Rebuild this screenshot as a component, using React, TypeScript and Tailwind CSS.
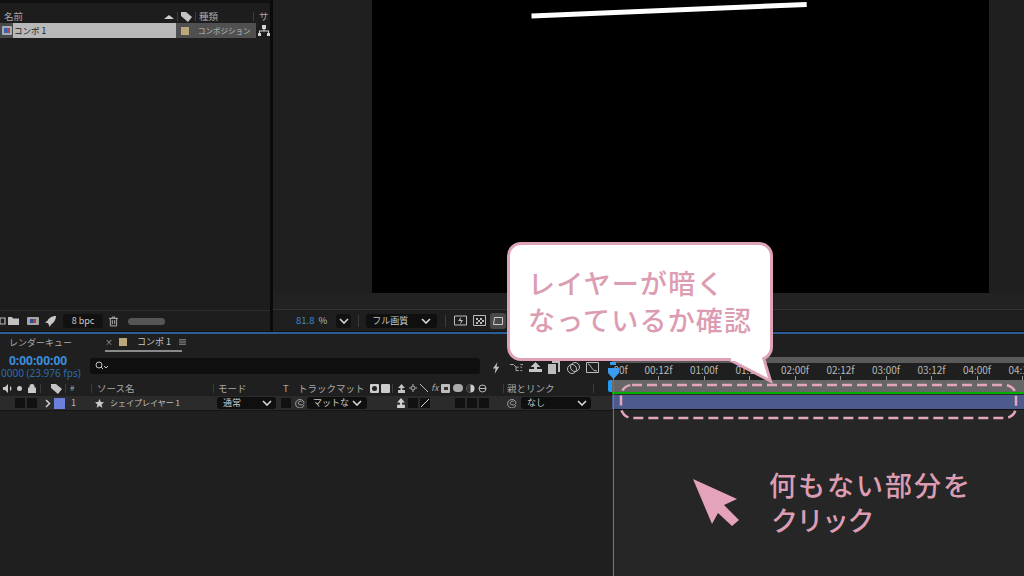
import React from "react";
const F = "font-['Noto_Sans_CJK_JP','Noto_Sans',sans-serif]";

function Chevron({ className = "" }: { className?: string }) {
  return (
    <svg width="10" height="6" viewBox="0 0 10 6" className={`shrink-0 ${className}`}>
      <path d="M1 1l4 4 4-4" fill="none" stroke="#d8d8d8" strokeWidth="1.6" />
    </svg>
  );
}

function Tag() {
  return (
    <svg width="11" height="11" viewBox="0 0 11 11" className="block">
      <path d="M0 1h5l6 5-4 5-7-6z" fill="#c4c4c4" />
    </svg>
  );
}

function Sep({ h = "h-[9px]" }: { h?: string }) {
  return <div className={`w-px ${h} bg-[#3c3c3c] shrink-0`} />;
}

function Sel({ w, text, className = "" }: { w: string; text: string; className?: string }) {
  return (
    <div className={`${w} h-[12px] rounded-[3px] bg-[#0f0f0f] flex items-center justify-between pl-[6px] pr-[4px] shrink-0 text-[9px] text-[#c8c8c8] ${className}`}>
      <span className="whitespace-nowrap">{text}</span>
      <Chevron />
    </div>
  );
}

function Sq() {
  return <div className="w-[10px] h-[10px] bg-[#111111] rounded-[1px] shrink-0" />;
}

function Spiral({ className = "" }: { className?: string }) {
  return (
    <svg width="10" height="10" viewBox="0 0 10 10" className={`shrink-0 ${className}`}>
      <path d="M9 7A4.300 4.300 0 1 1 9 4.500C9 7 5 7.500 3.500 6A2 2 0 0 1 6.500 3.500" fill="none" stroke="#a0a0a0" />
    </svg>
  );
}

const ticks = ["00:12f", "01:00f", "01:12f", "02:00f", "02:12f", "03:00f", "03:12f", "04:00f", "04:12f"];

function TopLeft() {
  return (
    <div className="w-[270px] h-full bg-[#1d1d1d] flex flex-col shrink-0">
      <div className="h-[3px] bg-[#111111]" />
      <div className="h-[20px] pt-[6px] flex items-center text-[9.500px] text-[#a8a8a8] pl-[4px]">
        <span className="w-[160px]">名前</span>
        <svg width="10" height="5" viewBox="0 0 10 5" className="mr-[3px]"><path d="M0 5l5-4 5 4z" fill="#cfcfcf" /></svg>
        <Sep />
        <span className="ml-[3px] mr-[3px]"><Tag /></span>
        <Sep />
        <span className="ml-[3px] w-[54px]">種類</span>
        <Sep />
        <span className="ml-[5px]">サ</span>
      </div>
      <div className="h-[15px] flex items-stretch">
        <div className="w-[13px] bg-[#4a4a4a] flex items-center justify-center">
          <div className="w-[10px] h-[9px] bg-[#a3adb8] rounded-[1px] flex items-center justify-center gap-0">
            <div className="w-[3px] h-[5px] bg-[#3a5fb0]" />
            <div className="w-[3px] h-[5px] bg-[#b04a4a]" />
          </div>
        </div>
        <div className="w-[163px] bg-[#b9b9b9] text-[#1a1a1a] text-[8.500px] flex items-center pl-[1px]">コンポ 1</div>
        <div className="w-[80px] bg-[#505050] flex items-center text-[7.500px] text-[#c0c0c0] whitespace-nowrap">
          <div className="w-[8px] h-[8px] bg-[#bba77c] ml-[5px] mr-[9px] shrink-0" />
          コンポジション
        </div>
        <svg width="12" height="11" viewBox="0 0 12 11" className="ml-[2px] mt-[2px]"><path d="M4 0h4v4H6.600v1.600H11V8h1v3H9V8h1V6.600H2V8h1v3H0V8h1V5.600h4.400V4H4z" fill="#d4d4d4" /></svg>
      </div>
      <div className="flex-1" />
      <div className="h-px bg-[#2c2c2c]" />
      <div className="h-[20px] flex items-center">
        <svg width="6" height="8" viewBox="0 0 6 8" className="mr-[2px]"><path d="M0 1h5v6H0z" fill="none" stroke="#b8b8b8" strokeWidth="1.200" /></svg>
        <svg width="11" height="8" viewBox="0 0 11 8" className="mr-[8px]"><path d="M0 0h4l1 1.500h6V8H0z" fill="#c2c2c2" /></svg>
        <div className="w-[12px] h-[8px] bg-[#a5a5a5] rounded-[1px] flex items-center justify-center mr-[6px]"><div className="w-[3px] h-[4px] bg-[#2f4f9a]" /><div className="w-[3px] h-[4px] bg-[#a84545]" /></div>
        <svg width="11" height="11" viewBox="0 0 12 12" className="mr-[7px]"><path d="M12 0C8 0 4 2 3 5L0 7l3 .500L4.500 10 5 12l2-3c3-2 5-5 5-9z" fill="#c8c8c8" /></svg>
        <div className="w-[40px] h-[14px] rounded-[3px] bg-[#111111] text-[9px] text-[#c8c8c8] flex items-center justify-center mr-[6px] shrink-0">8 bpc</div>
        <svg width="9" height="11" viewBox="0 0 10 11" className="mr-[10px]"><path d="M0 2h10M3.500 2V.600h3V2M1.500 2v8.400h7V2M3.700 4v4.500M6.300 4v4.500" fill="none" stroke="#bcbcbc" strokeWidth="1" /></svg>
        <div className="w-[37px] h-[7px] rounded-full bg-[#565656]" />
      </div>
    </div>
  );
}

function Viewer() {
  return (
    <div className="flex-1 h-full bg-[#1f1f1f] flex flex-col">
      <div className="h-[293px] flex justify-start pl-[99px] shrink-0">
        <div className="w-[617px] h-full bg-black relative overflow-hidden">
          <svg className="absolute left-0 top-0" width="617" height="30" viewBox="0 0 617 30">
            <path d="M159.500 16L434.700 4.500" stroke="#ffffff" strokeWidth="5" fill="none" />
          </svg>
        </div>
      </div>
      <div className="h-[16px] bg-[#222222] shrink-0" />
      <div className="h-px bg-[#333333] shrink-0" />
      <div className="flex-1 flex items-center text-[9.500px] bg-[#1e1e1e]">
        <span className="ml-[23px] text-[#3f86d1]">81.8</span>
        <span className="ml-[4px] text-[#b5b5b5]">%</span>
        <div className="ml-[9px] w-[15px] h-[14px] rounded-[3px] bg-[#111111] flex items-center justify-center shrink-0"><Chevron /></div>
        <div className="ml-[7px] mr-[7px]"><Sep h="h-[12px]" /></div>
        <Sel w="w-[71px]" text="フル画質" className="h-[14px] pr-[6px]" />
        <div className="ml-[8px] mr-[8px]"><Sep h="h-[12px]" /></div>
        <svg width="13" height="12" viewBox="0 0 13 12" className="mr-[6px] shrink-0"><path d="M.500 1h12v9H.500z" fill="none" stroke="#bbb" /><path d="M7 2L4 6h3l-1 4 3-5H6.500z" fill="#bbb" /></svg>
        <svg width="13" height="11" viewBox="0 0 13 11" className="mr-[4px] shrink-0"><path d="M.500.500h12v10H.500z" fill="none" stroke="#bbb" /><path d="M3 3h2v2H3zM7 3h2v2H7zM5 5h2v2H5zM9 5h2v2H9zM3 7h2v2H3zM7 7h2v2H7z" fill="#bbb" /></svg>
        <div className="w-[16px] h-[16px] bg-[#484848] rounded-[3px] flex items-center justify-center shrink-0"><svg width="12" height="10" viewBox="0 0 12 10"><path d="M2.500 1.500h8v7h-9z" fill="none" stroke="#ccc" /></svg></div>
      </div>
    </div>
  );
}

function Toolbar() {
  return (
    <div className="flex items-center">
      <svg width="9" height="12" viewBox="0 0 10 13" className="mr-[9px] shrink-0"><path d="M6 0L1 7h3l-1 6 5-8H5z" fill="#c4c4c4" /></svg>
      <svg width="13" height="10" viewBox="0 0 15 10" className="mr-[6px] shrink-0"><path d="M0 1h4l3 3h3M7 4v4h3M12 1h3M12 4h2M12 8h2" stroke="#c4c4c4" fill="none" /></svg>
      <svg width="13" height="12" viewBox="0 0 13 12" className="mr-[6px] shrink-0"><path d="M6.500 0l5 5H8v2h5v3H0V7h5V5H1.500z" fill="#c4c4c4" /></svg>
      <svg width="12" height="13" viewBox="0 0 12 13" className="mr-[7px] shrink-0"><path d="M4 0h8v11h-2V2H4zM0 3h8v10H0z" fill="#bdbdbd" /></svg>
      <svg width="13" height="12" viewBox="0 0 13 12" className="mr-[6px] shrink-0"><circle cx="5" cy="7" r="4.500" fill="none" stroke="#bdbdbd" /><circle cx="8" cy="5" r="4.500" fill="none" stroke="#bdbdbd" /></svg>
      <svg width="13" height="11" viewBox="0 0 13 11" className="shrink-0"><path d="M.500.500h12v10H.500zM2 2c3 0 3 7 9 7" fill="none" stroke="#bdbdbd" /></svg>
    </div>
  );
}

function Timeline() {
  return (
    <div className="flex-1 min-h-0 bg-[#1f1f1f] flex flex-col overflow-hidden">
      <div className="h-[22px] flex items-stretch text-[9px] text-[#a8a8a8] shrink-0">
        <div className="h-[18px] flex items-center">
          <span className="ml-[9px] w-[96px] whitespace-nowrap">レンダーキュー</span>
        </div>
        <div className="h-[18px] w-[77px] flex items-center border-b-2 border-[#8a8a8a]">
          <span className="text-[8px] mr-[6px]">×</span>
          <div className="w-[8px] h-[8px] bg-[#bba77c] mr-[10px] shrink-0" />
          <span className="text-[#c6c6c6] whitespace-nowrap">コンポ 1</span>
          <svg width="7" height="6" viewBox="0 0 8 6" className="ml-[8px] shrink-0"><path d="M0 .500h8M0 3h8M0 5.500h8" stroke="#a8a8a8" /></svg>
        </div>
      </div>
      <div className="flex flex-1 min-h-0">
        <div className="w-[612px] shrink-0 flex flex-col">
          <div className="h-[24px] flex">
            <div className="w-[90px] shrink-0 flex flex-col items-start">
              <span className="ml-[9px] mt-[-2px] text-[12px] leading-[14px] font-bold text-[#3b8edb] font-['Noto_Sans',sans-serif]">0:00:00:00</span>
              <span className="ml-[1px] text-[10px] leading-[11px] text-[#2e6cab] whitespace-nowrap font-['Noto_Sans',sans-serif]">0000 (23.976 fps)</span>
            </div>
            <div className="w-[390px] h-[16px] mt-[2px] rounded-[3px] bg-[#0f0f0f] flex items-center pl-[5px]">
              <svg width="14" height="10" viewBox="0 0 14 10"><circle cx="4" cy="4" r="3" fill="none" stroke="#c4c4c4" /><path d="M6 6l2 2M9 5l2 2 2-2" stroke="#c4c4c4" fill="none" /></svg>
            </div>
            <div className="ml-[12px] mt-[5px]"><Toolbar /></div>
          </div>
          <div className="h-[16px] flex items-center text-[9.500px] text-[#a8a8a8]">
            <svg width="10" height="9" viewBox="0 0 10 9" className="ml-[3px] mr-[4px] shrink-0"><path d="M0 3h2l3-3v9L2 6H0zM7 2c2 1 2 4 0 5" fill="#c8c8c8" /></svg>
            <div className="w-[5px] h-[5px] rounded-full bg-[#c8c8c8] mr-[6px] shrink-0" />
            <svg width="8" height="9" viewBox="0 0 8 9" className="mr-[4px] shrink-0"><path d="M0 4h8v5H0zM1.800 4V2.500a2.200 2.200 0 014.400 0V4" fill="#c8c8c8" stroke="#c8c8c8" strokeWidth=".8" /></svg>
            <Sep />
            <span className="ml-[10px] mr-[3px]"><Tag /></span>
            <Sep />
            <span className="ml-[4px] w-[21px] text-[8px]">#</span>
            <Sep />
            <span className="ml-[5px] w-[116px]">ソース名</span>
            <Sep />
            <span className="ml-[4px] w-[65px]">モード</span>
            <span className="w-[15px]">T</span>
            <span className="w-[72px] whitespace-nowrap">トラックマット</span>
            <div className="w-[9px] h-[9px] bg-[#cccccc] rounded-[1px] mr-[2px] flex items-center justify-center shrink-0"><div className="w-[5px] h-[5px] rounded-full bg-[#222222]" /></div>
            <div className="w-[9px] h-[9px] bg-[#cccccc] rounded-[1px] mr-[2px] shrink-0" />
            <Sep />
            <div className="ml-[4px] flex items-center gap-[3px] w-[106px] text-[8px]">
              <svg width="9" height="9" viewBox="0 0 9 9"><path d="M4.500 0l3.500 4H5.500v2H8v3H1V6h2.500V4H1z" fill="#c4c4c4" /></svg>
              <svg width="8" height="8" viewBox="0 0 8 8"><circle cx="4" cy="4" r="2" fill="none" stroke="#bbb" /><path d="M4 0v1.500M4 6.500V8M0 4h1.500M6.500 4H8" stroke="#bbb" /></svg>
              <svg width="8" height="8" viewBox="0 0 8 8"><path d="M0 0l8 8" stroke="#bbb" /></svg>
              <span className="italic text-[9px]">fx</span>
              <div className="w-[9px] h-[9px] bg-[#bdbdbd] rounded-[1px] flex items-center justify-center"><div className="w-[4px] h-[3px] bg-[#333333]" /></div>
              <div className="w-[10px] h-[8px] bg-[#aaaaaa] rounded-full" />
              <svg width="9" height="9" viewBox="0 0 9 9"><circle cx="4.500" cy="4.500" r="4" fill="#cccccc" /><path d="M4.500.500a4 4 0 000 8z" fill="#333333" /></svg>
              <svg width="9" height="9" viewBox="0 0 9 9"><circle cx="4.500" cy="4.500" r="3.500" fill="none" stroke="#bbb" /><path d="M1 4.500h7" stroke="#bbb" /></svg>
            </div>
            <Sep />
            <span className="ml-[3px] w-[86px] whitespace-nowrap">親とリンク</span>
            <Sep />
          </div>
          <div className="h-[14px] bg-[#2b2b2b] flex items-center">
            <div className="w-[15px] shrink-0" />
            <Sq />
            <div className="w-[2px] shrink-0" />
            <Sq />
            <svg width="6" height="9" viewBox="0 0 6 9" className="ml-[8px] mr-[3px] shrink-0"><path d="M1 1l3.500 3.500L1 8" fill="none" stroke="#d0d0d0" strokeWidth="1.500" /></svg>
            <div className="w-[11px] h-[11px] bg-[#6b7fdc] shrink-0" />
            <span className="ml-[6px] w-[24px] text-[9px] text-[#b8b8b8] shrink-0">1</span>
            <svg width="9" height="9" viewBox="0 0 10 10" className="mr-[6px] shrink-0"><path d="M5 0l1.500 3.400 3.500.300-2.700 2.300.900 3.600L5 7.700 1.800 9.600l.900-3.600L0 3.700l3.500-.300z" fill="#c8c8c8" /></svg>
            <span className="w-[107px] text-[8px] text-[#c0c0c0] whitespace-nowrap shrink-0">シェイプレイヤー 1</span>
            <Sel w="w-[59px]" text="通常" />
            <div className="ml-[5px]"><Sq /></div>
            <Spiral className="ml-[4px] mr-[2px]" />
            <div className="w-[60px] h-[12px] rounded-[3px] bg-[#0f0f0f] flex items-center pl-[6px] pr-[3px] shrink-0 text-[9px] text-[#c8c8c8]">
              <span className="whitespace-nowrap w-[39px]">マットな</span>
              <Chevron />
            </div>
            <div className="ml-[29px] w-[10px] h-[10px] flex items-center justify-center shrink-0"><svg width="10" height="10" viewBox="0 0 9 9"><path d="M4.500 0l3.500 4H5.500v2H8v3H1V6h2.500V4H1z" fill="#d0d0d0" /></svg></div>
            <div className="ml-[2px]"><Sq /></div>
            <div className="ml-[2px] w-[10px] h-[10px] bg-[#111111] flex items-center justify-center shrink-0"><svg width="8" height="8" viewBox="0 0 8 8"><path d="M0 8l8-8" stroke="#d8d8d8" /></svg></div>
            <div className="ml-[25px] flex gap-[2px] shrink-0"><Sq /><Sq /><Sq /></div>
            <Spiral className="ml-[18px] mr-[4px]" />
            <Sel w="w-[70px]" text="なし" />
          </div>
          <div className="h-px bg-[#141414]" />
          <div className="flex-1 bg-[#1f1f1f]" />
        </div>
        <div className="flex-1 min-w-0 flex flex-col relative bg-[#262626]">
          <div className="h-[7px] bg-[#1f1f1f] shrink-0 flex items-end"><div className="h-[6px] w-full bg-[#5a5a5a]" /></div>
          <div className="h-[17px] bg-[#1f1f1f] flex items-start text-[10px] text-[#b8b8b8] shrink-0">
            <span className="w-[23.750px] shrink-0 pr-[8px] text-right leading-[13px]">00f</span>
            {ticks.map((t) => (
              <div key={t} className="w-[45.500px] shrink-0 flex flex-col items-center whitespace-nowrap">
                <span className="leading-[13px]">{t}</span>
                <div className="w-px h-[4px] bg-[#9a9a9a]" />
              </div>
            ))}
          </div>
          <div className="h-[12px] bg-[#666666] shrink-0" />
          <div className="h-[2px] bg-[#00b000] shrink-0" />
          <div className="h-px bg-[#2a2a2a] shrink-0" />
          <div className="h-[14px] bg-[#4c5a8c] shrink-0" />
          <div className="h-px bg-[#111111] shrink-0" />
          <div className="flex-1" />
          <div className="absolute left-[1px] top-[12px] bottom-0 w-px bg-[#3f7fc4]" />
          <div className="absolute left-[-2px] top-[6px] w-[6px] h-[3px] bg-[#3b9bef]" />
          <svg className="absolute left-[-4px] top-[12px]" width="11" height="11" viewBox="0 0 11 11"><path d="M0 0h11v5l-5.500 6L0 5z" fill="#3b9bef" /></svg>
          <div className="absolute left-[-4px] top-[24px] w-[4px] h-[12px] rounded-l-[2px] bg-[#1f9bf0]" />
        </div>
      </div>
    </div>
  );
}

function Annotations() {
  return (
    <>
      <div className="absolute left-[507px] top-[242px] w-[266px] h-[119px] bg-white border-[3px] border-[#dfa3b9] rounded-[14px] pl-[18px] pt-[19px] text-[27px] leading-[37px] font-medium text-[#dc9db3] tracking-[1.200px] whitespace-nowrap">
        レイヤーが暗く
        <br />
        なっているか確認
      </div>
      <svg className="absolute left-[720px] top-[355px]" width="56" height="30" viewBox="0 0 56 30">
        <path d="M10 5L50.500 26L43.500 3" fill="#ffffff" stroke="#dfa3b9" strokeWidth="3" />
        <path d="M11 0h31v6H11z" fill="#ffffff" />
      </svg>
      <svg className="absolute left-[618px] top-[382px]" width="401" height="39" viewBox="0 0 401 39">
        <rect x="3" y="3" width="395" height="33" rx="11" fill="none" stroke="#e3a6bc" strokeWidth="2.500" strokeDasharray="10 5" />
      </svg>
      <svg className="absolute left-[692px] top-[478px]" width="50" height="50" viewBox="0 0 50 50">
        <path d="M1 1L45 21L32 27L47 42L40 48L26 35L20 46z" fill="#e5a2bb" />
      </svg>
      <div className="absolute left-[769px] top-[467px] text-[27px] leading-[35px] font-medium text-[#dc9db3] tracking-[2px] whitespace-nowrap">
        何もない部分を
        <br />
        <span className="ml-[2px] tracking-[-1.500px]">クリック</span>
      </div>
    </>
  );
}

export default function App() {
  return (
    <div className={`relative w-[1024px] h-[576px] overflow-hidden bg-[#111111] flex flex-col ${F}`}>
      <div className="h-[331px] flex shrink-0">
        <TopLeft />
        <div className="w-[3px] bg-[#0a0a0a] shrink-0" />
        <Viewer />
      </div>
      <div className="h-px bg-[#111111] shrink-0" />
      <div className="h-[2px] bg-[#2b5d96] shrink-0" />
      <Timeline />
      <Annotations />
    </div>
  );
}
